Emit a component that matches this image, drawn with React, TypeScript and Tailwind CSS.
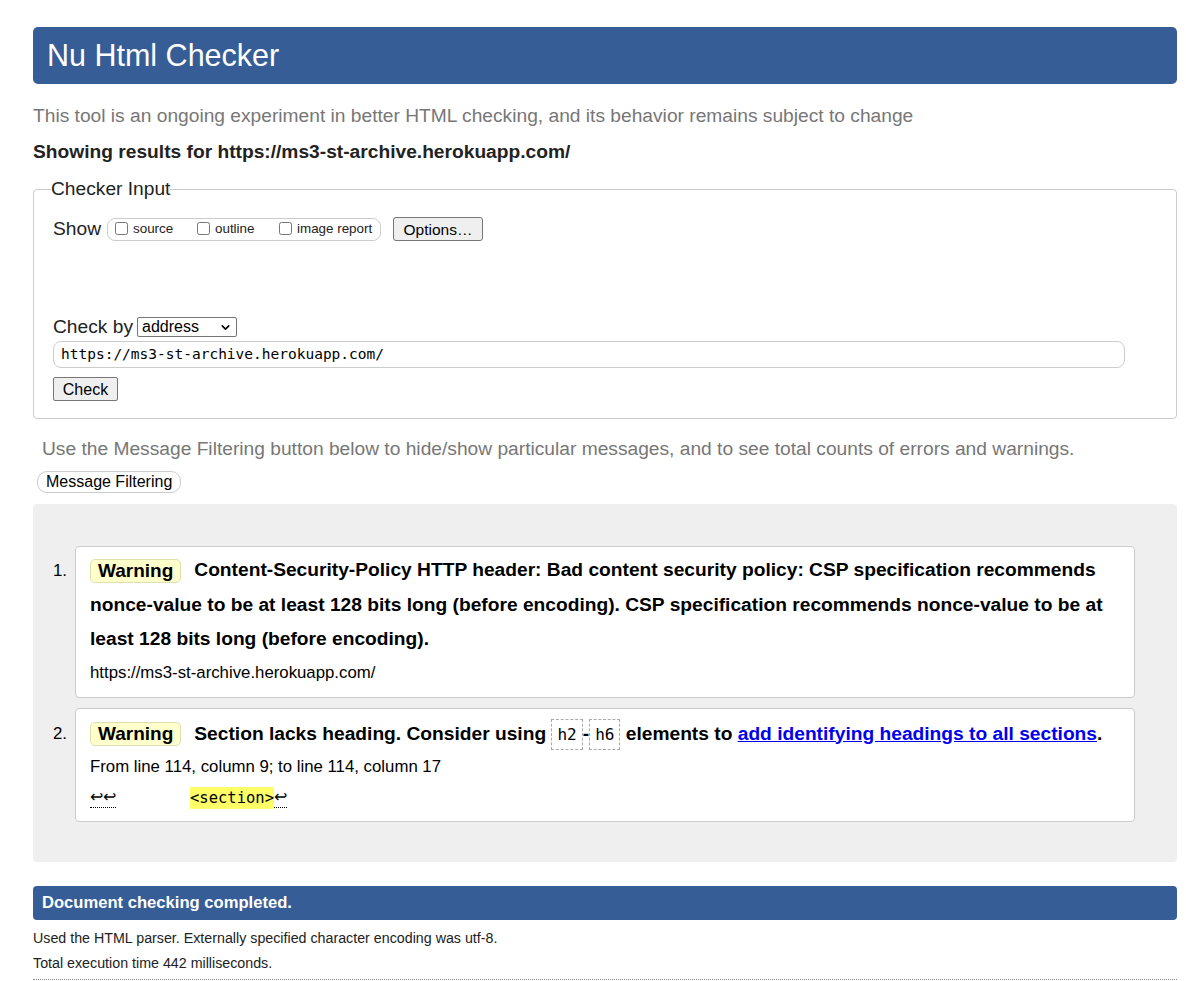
import { ChevronDown } from "lucide-react";

const sans = { fontFamily: '"Liberation Sans", Arial, sans-serif' };

function Badge() {
  return (
    <span className="inline-block h-[24px] leading-[22px] px-[7px] mr-[13px] rounded-[5px] border border-[#e0dfb0] bg-[#ffffcc] font-bold text-[19px] text-black align-middle">
      Warning
    </span>
  );
}

function Code({ children }: { children: React.ReactNode }) {
  return (
    <code className="inline-block px-[5px] h-[31px] leading-[29px] border border-dashed border-[#aaa] font-['DejaVu_Sans_Mono',monospace] font-normal text-[16px] align-middle">
      {children}
    </code>
  );
}

export default function App() {
  return (
    <div className="bg-white min-h-[981px] pl-[33px] pr-[9px] pt-[27px] text-[#222]" style={sans}>
      <h1 className="h-[57px] rounded-[5px] bg-[#365d95] text-white text-[30.5px] leading-[57px] pl-[14px] font-normal">
        Nu Html Checker
      </h1>

      <p className="mt-[21px] text-[19.2px] leading-[22px] text-[#777]">
        This tool is an ongoing experiment in better HTML checking, and its behavior remains subject to change
      </p>
      <p className="mt-[14px] text-[19.2px] leading-[22px] font-bold text-[#222]">
        Showing results for https://ms3-st-archive.herokuapp.com/
      </p>

      <fieldset className="mt-[15px] border border-[#ccc] rounded-[4px] pl-[19px] pr-[51px] pb-[17px]">
        <legend className="-ml-[2px] text-[19.2px] leading-[22px] text-[#222]">Checker Input</legend>

        <div className="mt-[17px] flex items-center h-[24px]">
          <span className="text-[19.2px] mr-[6px]">Show</span>
          <span className="flex items-center w-[274px] h-[23px] border border-[#ccc] rounded-[8px] pl-[7px] pr-[7px] text-[13.4px]">
            <label className="w-[82px] flex items-center gap-[5px]">
              <input type="checkbox" className="m-0 w-[13px] h-[13px]" />
              source
            </label>
            <label className="w-[82px] flex items-center gap-[5px]">
              <input type="checkbox" className="m-0 w-[13px] h-[13px]" />
              outline
            </label>
            <label className="flex items-center gap-[5px]">
              <input type="checkbox" className="m-0 w-[13px] h-[13px]" />
              image report
            </label>
          </span>
          <button className="ml-[12px] h-[24px] w-[90px] text-[15.5px] bg-[#efefef] border border-[#767676] rounded-[3px] text-black">
            Options…
          </button>
        </div>

        <div className="mt-[76px] flex items-center h-[20px]">
          <span className="text-[19.2px] mr-[4px]">Check by</span>
          <span className="w-[100px] h-[20px] flex items-center justify-between border border-[#767676] rounded-[2px] pl-[4px] pr-[4px] text-[16px] text-black">
            address
            <ChevronDown className="w-[13px] h-[13px]" strokeWidth={3} />
          </span>
        </div>

        <div className="mt-[4px] h-[27px] border border-[#ccc] rounded-[8px] pl-[7px] flex items-center font-['DejaVu_Sans_Mono',monospace] text-[14.5px] text-black">
          https://ms3-st-archive.herokuapp.com/
        </div>

        <button className="mt-[9px] block h-[24px] w-[65px] text-[16px] bg-[#efefef] border border-[#767676] rounded-[2px] text-black">
          Check
        </button>
      </fieldset>

      <p className="mt-[19px] ml-[9px] text-[19.2px] leading-[22px] text-[#777]">
        Use the Message Filtering button below to hide/show particular messages, and to see total counts of errors and warnings.
      </p>
      <button className="mt-[11px] ml-[4px] h-[22px] px-[8px] rounded-[10px] border border-[#ccc] bg-white text-[16px] leading-[20px] text-black">
        Message Filtering
      </button>

      <div className="mt-[10px] bg-[#efefef] rounded-[4px] pt-[42px] pb-[40px] pl-[20px] pr-[42px]">
        <ol className="flex flex-col gap-[10px]">
          <li className="flex">
            <span className="w-[22px] pt-[13px] text-[16.8px] leading-[24px] text-black">1.</span>
            <div className="flex-1 bg-white border border-[#ccc] rounded-[4px] pl-[14px] pr-[14px] pt-[6px] pb-[12px]">
              <p className="font-bold text-[19.2px] leading-[34.5px] text-black">
                <Badge />
                Content-Security-Policy HTTP header: Bad content security policy: CSP specification recommends nonce-value to be at least 128 bits long (before encoding). CSP specification recommends nonce-value to be at least 128 bits long (before encoding).
              </p>
              <p className="mt-[4px] text-[16.8px] leading-[24px] text-black">https://ms3-st-archive.herokuapp.com/</p>
            </div>
          </li>
          <li className="flex">
            <span className="w-[22px] pt-[14px] text-[16.8px] leading-[24px] text-black">2.</span>
            <div className="flex-1 bg-white border border-[#ccc] rounded-[4px] pl-[14px] pr-[14px] pt-[8px] pb-[12px]">
              <p className="font-bold text-[19.2px] leading-[34px] text-black">
                <Badge />
                Section lacks heading. Consider using <Code>h2</Code>-<Code>h6</Code> elements to{" "}
                <a href="#" className="text-[#0000ee] underline">add identifying headings to all sections</a>.
              </p>
              <p className="mt-[4px] text-[16.8px] leading-[24px] text-black">From line 114, column 9; to line 114, column 17</p>
              <p className="mt-[8px] flex items-center text-[16px] leading-[22px] text-black">
                <span className="border-b border-dotted border-black leading-[20px]">↩↩</span>
                <code className="ml-[74px] bg-[#ffff66] font-['DejaVu_Sans_Mono',monospace] text-[15.5px] leading-[22px]">&lt;section&gt;</code>
                <span className="border-b border-dotted border-black leading-[20px]">↩</span>
              </p>
            </div>
          </li>
        </ol>
      </div>

      <div className="mt-[24px] h-[34px] rounded-[4px] bg-[#365d95] text-white font-bold text-[16.6px] leading-[34px] pl-[9px]">
        Document checking completed.
      </div>
      <p className="mt-[10px] text-[14.25px] leading-[16px] text-[#222]">
        Used the HTML parser. Externally specified character encoding was utf-8.
      </p>
      <p className="mt-[9px] text-[14.25px] leading-[16px] text-[#222]">Total execution time 442 milliseconds.</p>
      <div className="mt-[8px] border-t border-dotted border-[#888]" />
    </div>
  );
}
